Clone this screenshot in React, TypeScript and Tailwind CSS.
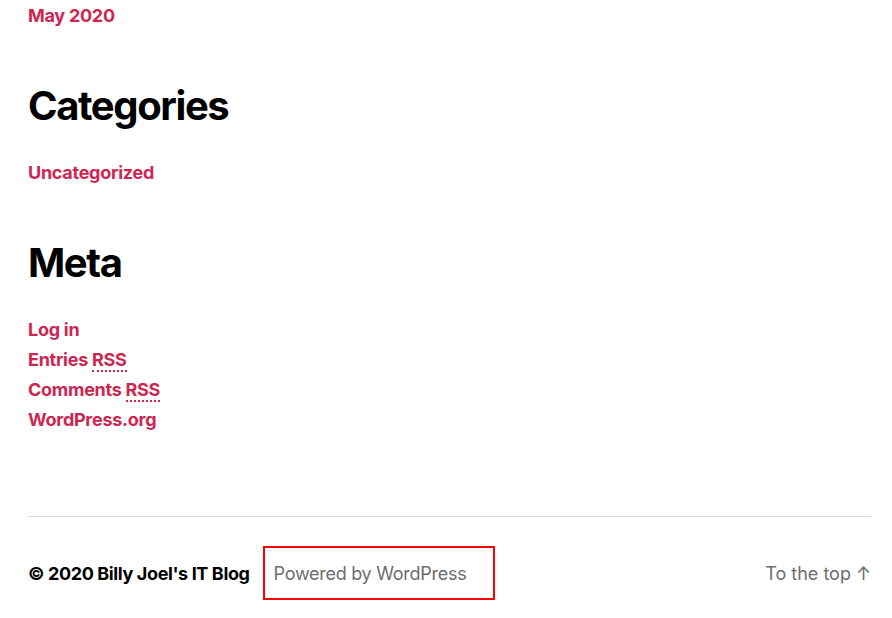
const font = { fontFamily: "Inter, 'Noto Sans', sans-serif" };

const WidgetTitle = ({ children }: { children: React.ReactNode }) => (
  <h2 className="text-[40px] leading-[48px] font-bold tracking-[-0.035em] text-black mb-[28px]">
    {children}
  </h2>
);

const WidgetLink = ({ children }: { children: React.ReactNode }) => (
  <li>
    <a href="#" className="text-[18px] leading-[30px] font-bold tracking-[-0.015em] text-[#cd2653]">
      {children}
    </a>
  </li>
);

const Abbr = ({ children }: { children: React.ReactNode }) => (
  <abbr className="no-underline border-b-2 border-dotted border-[#cd2653]">{children}</abbr>
);

export default function App() {
  return (
    <div className="bg-white min-h-[618px] w-full pt-[1px]" style={font}>
      <div className="pl-[28px] pr-[21px]">
        <ul>
          <WidgetLink>May 2020</WidgetLink>
        </ul>

        <section className="mt-[51px]">
          <WidgetTitle>Categories</WidgetTitle>
          <ul>
            <WidgetLink>Uncategorized</WidgetLink>
          </ul>
        </section>

        <section className="mt-[51px]">
          <WidgetTitle>Meta</WidgetTitle>
          <ul>
            <WidgetLink>Log in</WidgetLink>
            <WidgetLink>
              Entries <Abbr>RSS</Abbr>
            </WidgetLink>
            <WidgetLink>
              Comments <Abbr>RSS</Abbr>
            </WidgetLink>
            <WidgetLink>WordPress.org</WidgetLink>
          </ul>
        </section>

        <footer className="mt-[81px] border-t border-[#dcd7ca] pt-[29px] flex items-center justify-between">
          <div className="flex items-center">
            <p className="text-[18px] font-bold tracking-[-0.021em] text-black">
              © 2020{" "}
              <a href="#">Billy Joel's IT Blog</a>
            </p>
            <p className="ml-[13px] border-2 border-[#ff0000] w-[232px] h-[54px] flex items-center pl-[9px] text-[18px] tracking-[-0.015em] text-[#6d6d6d]">
              <a href="#">Powered by WordPress</a>
            </p>
          </div>
          <a href="#" className="text-[18px] tracking-normal text-[#6d6d6d]">
            To the top <span>↑</span>
          </a>
        </footer>
      </div>
    </div>
  );
}
